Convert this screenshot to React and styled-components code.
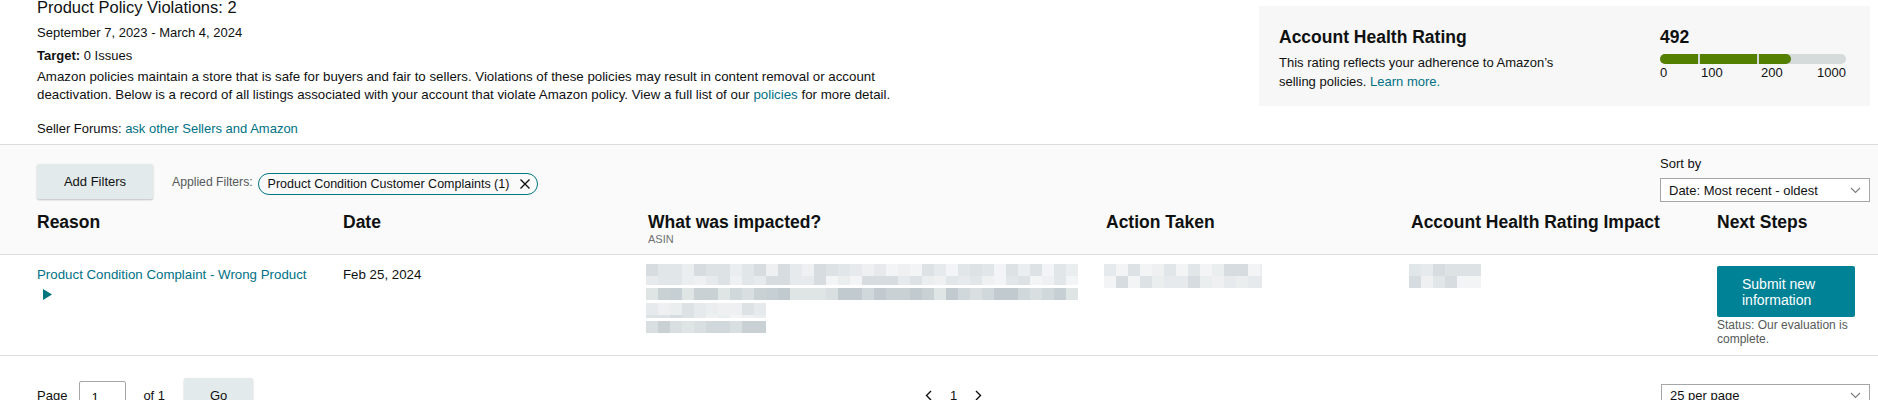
import React from 'react';
import styled, { createGlobalStyle } from 'styled-components';

const GlobalStyle = createGlobalStyle`
    html, body {
        margin: 0;
        padding: 0;
        background: #ffffff;
        font-family: "Liberation Sans", Arial, sans-serif;
        color: #0f1111;
        font-size: 13px;
    }
`;

const Page = styled.div`
    width: 1878px;
    overflow: hidden;
`;

const Top = styled.div`
    display: flex;
    justify-content: space-between;
    padding: 0 8px 0 37px;
    height: 144px;
`;

const Intro = styled.div`
    display: flex;
    flex-direction: column;
`;

const Title = styled.h1`
    margin: -3px 0 0;
    font-size: 16.5px;
    line-height: 20px;
    font-weight: 400;
`;

const Line = styled.div`
    margin-top: ${p => p.gap || 0}px;
    line-height: 18px;
    font-size: ${p => p.size || 13}px;
    max-width: ${p => p.max || 'none'};
`;

const Link = styled.a`
    color: #007185;
    text-decoration: none;
`;

const Card = styled.div`
    margin-top: 6px;
    width: 611px;
    height: 100px;
    box-sizing: border-box;
    background: #f7f7f7;
    display: flex;
    padding: 21px 24px 0 20px;
`;

const CardText = styled.div`
    width: 381px;
`;

const CardTitle = styled.div`
    font-size: 17.5px;
    font-weight: 700;
    line-height: 20px;
`;

const CardDesc = styled.div`
    margin-top: 6px;
    line-height: 19px;
    width: 290px;
`;

const Rating = styled.div`
    width: 186px;
`;

const Score = styled.div`
    font-size: 17.5px;
    font-weight: 700;
    line-height: 20px;
`;

const Bar = styled.div`
    margin-top: 7px;
    height: 10px;
    border-radius: 5px;
    background: #d5dbdb;
    display: flex;
    gap: 2px;
    overflow: hidden;
`;

const Segment = styled.div`
    width: ${p => p.w}px;
    background: #538000;
    border-radius: ${p => (p.end ? '0 5px 5px 0' : '0')};
`;

const Scale = styled.div`
    display: flex;
    line-height: 16px;
    margin-top: 1px;
`;

const Tick = styled.span`
    width: ${p => p.w}px;
    text-align: ${p => p.align || 'left'};
`;

const FilterArea = styled.div`
    background: #fafafa;
    border-top: 1px solid #dddddd;
    border-bottom: 1px solid #dddddd;
    padding: 12px 8px 0 37px;
    height: 111px;
    box-sizing: border-box;
`;

const FilterBar = styled.div`
    display: flex;
    justify-content: space-between;
    align-items: flex-end;
`;

const FilterGroup = styled.div`
    display: flex;
    align-items: center;
    padding-bottom: 3px;
`;

const GrayButton = styled.button`
    width: ${p => p.w}px;
    height: 35px;
    border: none;
    border-radius: 2px;
    background: #e3eaeb;
    box-shadow: 0 1px 2px rgba(15, 17, 17, 0.25);
    font-family: inherit;
    font-size: 13px;
    color: #0f1111;
    padding: 0;
`;

const FilterLabel = styled.span`
    margin-left: 19px;
    font-size: 12.2px;
    color: #565959;
`;

const Chip = styled.div`
    margin-left: 5px;
    margin-top: 5px;
    height: 20px;
    display: flex;
    align-items: center;
    gap: 10px;
    padding: 0 6px 0 9px;
    border: 1px solid #00767f;
    border-radius: 11px;
    font-size: 12.5px;
`;

const SortBlock = styled.div`
    width: 210px;
    display: flex;
    flex-direction: column;
`;

const SmallLabel = styled.div`
    line-height: 14px;
    margin-bottom: 7px;
`;

const Select = styled.div`
    width: ${p => p.w}px;
    height: 24px;
    box-sizing: border-box;
    border: 1px solid #a6a6a6;
    background: #ffffff;
    display: flex;
    align-items: center;
    justify-content: space-between;
    padding: 0 8px 0 8px;
`;

const Grid = styled.div`
    display: grid;
    grid-template-columns: 306px 305px 458px 305px 306px 152px;
`;

const HeadCell = styled.div`
    padding-top: 9px;
`;

const HeadTitle = styled.div`
    font-size: 17.5px;
    font-weight: 700;
    line-height: 22px;
`;

const HeadSub = styled.div`
    font-size: 11px;
    line-height: 13px;
    color: #6f7373;
`;

const Row = styled(Grid)`
    padding: 11px 8px 10px 37px;
    border-bottom: 1px solid #dddddd;
    height: 101px;
    box-sizing: border-box;
    font-size: 13.3px;
`;

const Cell = styled.div`
    line-height: 18px;
    display: flex;
    flex-direction: column;
    align-items: flex-start;
`;

const Blurred = styled.div`
    display: flex;
    flex-direction: column;
    gap: ${p => p.gap || 0}px;
    margin-left: -2px;
    margin-top: -2px;
`;

const PrimaryButton = styled.button`
    width: 138px;
    height: 51px;
    border: none;
    border-radius: 2px;
    background: #008296;
    color: #ffffff;
    font-family: inherit;
    font-size: 14px;
    line-height: 16px;
    padding: 0 20px 0 25px;
    text-align: left;
`;

const Status = styled.div`
    width: 140px;
    margin-top: 1px;
    font-size: 12px;
    line-height: 14px;
    color: #565959;
`;

const Pager = styled.div`
    display: grid;
    grid-template-columns: 1fr auto 1fr;
    align-items: center;
    padding: 22px 8px 0 37px;
`;

const PagerLeft = styled.div`
    display: flex;
    align-items: center;
`;

const PageInput = styled.div`
    width: 47px;
    height: 30px;
    box-sizing: border-box;
    border: 1px solid #a6a6a6;
    border-radius: 2px;
    margin: 0 17px 0 12px;
    padding: 8px 0 0 11px;
`;

const OfText = styled.span`
    margin-right: 19px;
`;

const PagerCenter = styled.div`
    display: flex;
    align-items: center;
    gap: 18px;
`;

const PagerRight = styled.div`
    display: flex;
    justify-content: flex-end;
`;

const greys = {
    light: ['#e6eaec', '#dde2e4', '#eef0f1', '#d6dcdf', '#f3f4f5', '#e1e6e8', '#ebeeef'],
    dark: ['#c9d1d4', '#d1d8db', '#c1cbcf', '#d9dfe1', '#c6cfd3', '#dfe4e5'],
};

function Mosaic({ w, h, seed, tone = 'light', cell = 12 }) {
    const cols = Math.ceil(w / cell);
    const rows = Math.ceil(h / cell);
    const palette = greys[tone];
    const rects = [];
    for (let r = 0; r < rows; r++) {
        for (let c = 0; c < cols; c++) {
            const n = Math.abs(Math.sin((c + 1) * 12.9898 + (r + 1) * 78.233 + seed * 3.7) * 43758.5453);
            const color = palette[Math.floor(n) % palette.length];
            rects.push(<rect key={r + '-' + c} x={c * cell} y={r * cell} width={cell} height={cell} fill={color} />);
        }
    }
    return (
        <svg width={w} height={h} style={{ display: 'block' }}>
            {rects}
        </svg>
    );
}

const Chevron = () => (
    <svg width="11" height="7" viewBox="0 0 11 7">
        <path d="M1 1 L5.5 5.5 L10 1" fill="none" stroke="#7d8080" strokeWidth="1.2" />
    </svg>
);

const CloseIcon = () => (
    <svg width="12" height="12" viewBox="0 0 12 12">
        <path d="M1.5 1.5 L10.5 10.5 M10.5 1.5 L1.5 10.5" stroke="#0f1111" strokeWidth="1.4" />
    </svg>
);

const Caret = () => (
    <svg width="9" height="11" viewBox="0 0 9 11" style={{ marginTop: 5, marginLeft: 6 }}>
        <polygon points="0,0 9,5.5 0,11" fill="#00767f" />
    </svg>
);

const Arrow = ({ dir }) => (
    <svg width="7" height="11" viewBox="0 0 7 11">
        <path d={dir === 'left' ? 'M6 1 L1.5 5.5 L6 10' : 'M1 1 L5.5 5.5 L1 10'} fill="none" stroke="#0f1111" strokeWidth="1.4" />
    </svg>
);

export default function App() {
    return (
        <Page>
            <GlobalStyle />
            <Top>
                <Intro>
                    <Title>Product Policy Violations: 2</Title>
                    <Line gap={7}>September 7, 2023 - March 4, 2024</Line>
                    <Line gap={5}><b>Target:</b> 0 Issues</Line>
                    <Line gap={3} size={13.3} max="880px">
                        Amazon policies maintain a store that is safe for buyers and fair to sellers. Violations of these policies may result in content removal or account deactivation. Below is a record of all listings associated with your account that violate Amazon policy. View a full list of our <Link href="#">policies</Link> for more detail.
                    </Line>
                    <Line gap={16}>Seller Forums: <Link href="#">ask other Sellers and Amazon</Link></Line>
                </Intro>
                <Card>
                    <CardText>
                        <CardTitle>Account Health Rating</CardTitle>
                        <CardDesc>
                            This rating reflects your adherence to Amazon’s selling policies. <Link href="#">Learn more.</Link>
                        </CardDesc>
                    </CardText>
                    <Rating>
                        <Score>492</Score>
                        <Bar>
                            <Segment w={38} />
                            <Segment w={57} />
                            <Segment w={32} end />
                        </Bar>
                        <Scale>
                            <Tick w={41}>0</Tick>
                            <Tick w={60}>100</Tick>
                            <Tick w={40}>200</Tick>
                            <Tick w={45} align="right">1000</Tick>
                        </Scale>
                    </Rating>
                </Card>
            </Top>

            <FilterArea>
                <FilterBar>
                    <FilterGroup>
                        <GrayButton w={116}>Add Filters</GrayButton>
                        <FilterLabel>Applied Filters:</FilterLabel>
                        <Chip>
                            Product Condition Customer Complaints (1)
                            <CloseIcon />
                        </Chip>
                    </FilterGroup>
                    <SortBlock>
                        <SmallLabel>Sort by</SmallLabel>
                        <Select w={210}>
                            <span>Date: Most recent - oldest</span>
                            <Chevron />
                        </Select>
                    </SortBlock>
                </FilterBar>
                <Grid>
                    <HeadCell><HeadTitle>Reason</HeadTitle></HeadCell>
                    <HeadCell><HeadTitle>Date</HeadTitle></HeadCell>
                    <HeadCell>
                        <HeadTitle>What was impacted?</HeadTitle>
                        <HeadSub>ASIN</HeadSub>
                    </HeadCell>
                    <HeadCell><HeadTitle>Action Taken</HeadTitle></HeadCell>
                    <HeadCell><HeadTitle>Account Health Rating Impact</HeadTitle></HeadCell>
                    <HeadCell><HeadTitle>Next Steps</HeadTitle></HeadCell>
                </Grid>
            </FilterArea>

            <Row>
                <Cell>
                    <Link href="#">Product Condition Complaint - Wrong Product</Link>
                    <Caret />
                </Cell>
                <Cell>Feb 25, 2024</Cell>
                <Cell>
                    <Blurred gap={3}>
                        <Mosaic w={432} h={21} seed={1} />
                        <Mosaic w={432} h={12} seed={2} tone="dark" />
                        <Mosaic w={120} h={15} seed={3} />
                        <Mosaic w={120} h={12} seed={4} tone="dark" />
                    </Blurred>
                </Cell>
                <Cell>
                    <Blurred>
                        <Mosaic w={158} h={24} seed={5} />
                    </Blurred>
                </Cell>
                <Cell>
                    <Blurred>
                        <Mosaic w={72} h={24} seed={6} />
                    </Blurred>
                </Cell>
                <Cell>
                    <PrimaryButton>Submit new information</PrimaryButton>
                    <Status>Status: Our evaluation is complete.</Status>
                </Cell>
            </Row>

            <Pager>
                <PagerLeft>
                    <span>Page</span>
                    <PageInput>1</PageInput>
                    <OfText>of 1</OfText>
                    <GrayButton w={69}>Go</GrayButton>
                </PagerLeft>
                <PagerCenter>
                    <Arrow dir="left" />
                    <span>1</span>
                    <Arrow dir="right" />
                </PagerCenter>
                <PagerRight>
                    <Select w={209}>
                        <span>25 per page</span>
                        <Chevron />
                    </Select>
                </PagerRight>
            </Pager>
        </Page>
    );
}
